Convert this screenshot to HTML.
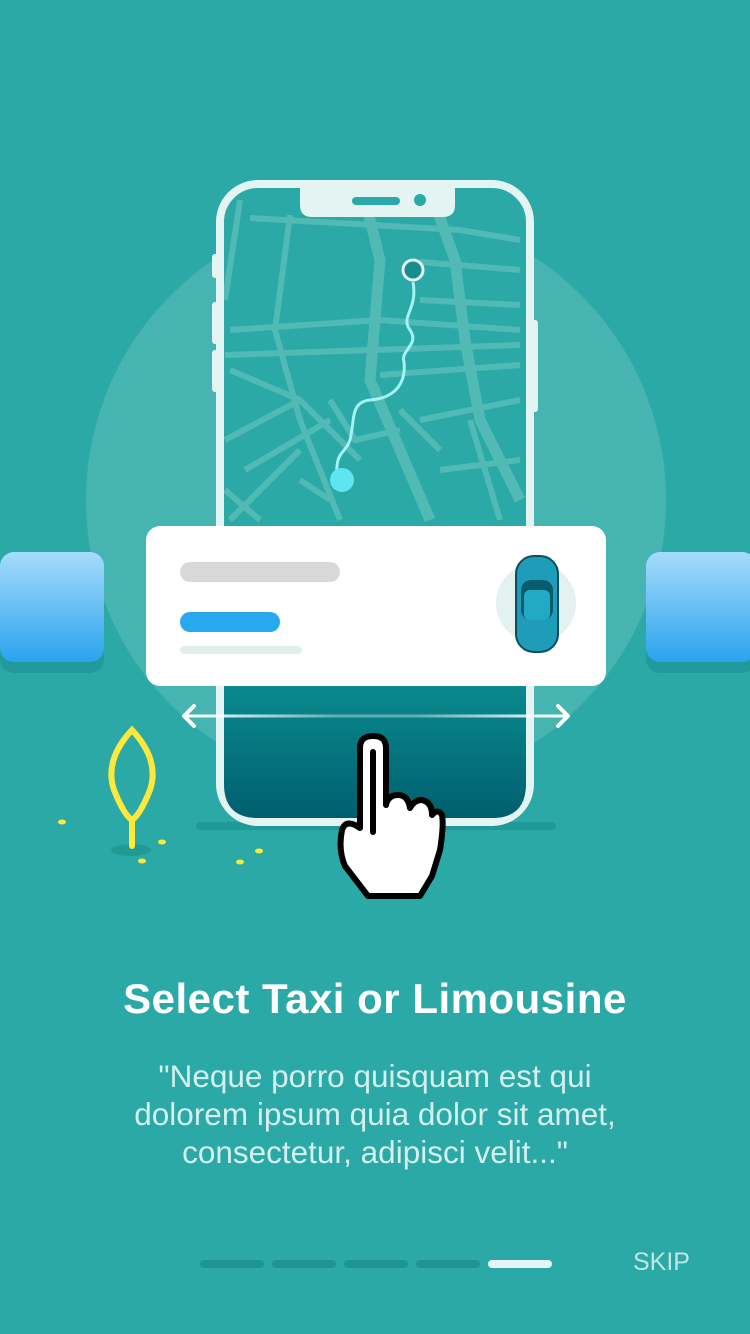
<!DOCTYPE html>
<html><head><meta charset="utf-8"><style>
html,body{margin:0;padding:0;}
body{width:750px;height:1334px;background:#2aa9a6;position:relative;overflow:hidden;font-family:"Liberation Sans",sans-serif;}
.t{position:absolute;left:0;width:750px;text-align:center;color:#fff;}
</style></head><body>
<svg width="750" height="1334" style="position:absolute;left:0;top:0">
<defs>
<linearGradient id="dk" x1="0" y1="0" x2="0" y2="1"><stop offset="0" stop-color="#0a8a8e"/><stop offset="1" stop-color="#005f6e"/></linearGradient>
<linearGradient id="bl" x1="0" y1="0" x2="0" y2="1"><stop offset="0" stop-color="#a6dcfa"/><stop offset="1" stop-color="#2aa3ee"/></linearGradient>
<linearGradient id="ar" gradientUnits="userSpaceOnUse" x1="186" y1="0" x2="566" y2="0"><stop offset="0" stop-color="#fff"/><stop offset=".4" stop-color="#fff" stop-opacity=".35"/><stop offset=".6" stop-color="#fff" stop-opacity=".35"/><stop offset="1" stop-color="#fff"/></linearGradient>
<clipPath id="sc"><rect x="224" y="188" width="302" height="630" rx="34"/></clipPath>
</defs>
<circle cx="376" cy="500" r="290" fill="#46b5b1"/>
<rect x="196" y="822" width="360" height="8" rx="4" fill="#1f9a96"/>
<rect x="0" y="563" width="104" height="110" rx="14" fill="#22999a"/>
<rect x="0" y="552" width="104" height="110" rx="14" fill="url(#bl)"/>
<rect x="646" y="563" width="110" height="110" rx="14" fill="#22999a"/>
<rect x="646" y="552" width="110" height="110" rx="14" fill="url(#bl)"/>
<rect x="212" y="254" width="8" height="24" rx="3" fill="#e4f4f2"/>
<rect x="212" y="302" width="8" height="42" rx="3" fill="#e4f4f2"/>
<rect x="212" y="350" width="8" height="42" rx="3" fill="#e4f4f2"/>
<rect x="530" y="320" width="8" height="92" rx="3" fill="#e4f4f2"/>
<rect x="220" y="184" width="310" height="638" rx="38" fill="#2aa9a6" stroke="#e4f4f2" stroke-width="8"/>
<g clip-path="url(#sc)" stroke="#52bab5" fill="none" stroke-width="6">
<path d="M230 330 L380 320 L520 330 M225 355 L520 345 M240 200 L225 300 M290 215 L275 330 L300 420 L340 520 M250 218 L460 230 L520 240 M420 262 L520 270 M420 300 L520 305 M380 375 L520 365 M420 420 L520 400 M230 370 L300 400 L360 460 M225 440 L300 400 M245 470 L330 420 M230 520 L300 450 M400 410 L440 450 M470 420 L500 520 M330 400 L355 440 L400 430 M225 490 L260 520 M440 470 L520 460 M300 480 L330 500"/>
<path d="M430 190 L455 260 L465 340 L480 420 L520 500" stroke-width="11"/>
<path d="M365 200 L380 260 L370 380 L430 520" stroke-width="11"/>
</g>
<path d="M300 188 H455 V205 Q455 217 443 217 H312 Q300 217 300 205 Z" fill="#e4f4f2"/>
<rect x="352" y="197" width="48" height="8" rx="4" fill="#2aa9a6"/>
<circle cx="420" cy="200" r="6" fill="#2aa9a6"/>
<path d="M413 282 C418 310 400 316 410 330 C420 345 400 350 404 362 C406 380 398 398 370 400 C350 402 355 420 350 440 C345 455 335 450 337 478" fill="none" stroke="#a5f1f3" stroke-width="3"/>
<circle cx="413" cy="270" r="10" fill="#168e8c" stroke="#e4f4f2" stroke-width="3"/>
<circle cx="342" cy="480" r="12" fill="#5fe4f2"/>
<path d="M224 686 H526 V784 Q526 818 492 818 H258 Q224 818 224 784 Z" fill="url(#dk)"/>
<rect x="146" y="526" width="460" height="160" rx="14" fill="#fff"/>
<rect x="180" y="562" width="160" height="20" rx="10" fill="#d8d8d8"/>
<rect x="180" y="612" width="100" height="20" rx="10" fill="#27a8ef"/>
<rect x="180" y="646" width="122" height="8" rx="4" fill="#e0eeec"/>
<circle cx="536" cy="603" r="40" fill="#e3f2f1"/>
<rect x="516" y="556" width="42" height="96" rx="18" fill="#1e9cb8" stroke="#0d4e5e" stroke-width="2"/>
<rect x="521" y="580" width="32" height="40" rx="10" fill="#0b5b6e"/>
<rect x="524" y="590" width="26" height="30" rx="6" fill="#22aac4"/>
<rect x="186" y="714.5" width="380" height="3" fill="url(#ar)"/>
<path d="M194 706 L184 716 L194 726 M558 706 L568 716 L558 726" stroke="#fff" stroke-width="4" fill="none" stroke-linecap="round" stroke-linejoin="round"/>
<path d="M360 828 V748 Q360 736 373 736 Q386 736 386 748 V805 Q388 795 398 795 Q408 795 410 808 Q414 800 422 800 Q432 802 432 815 Q438 808 442 815 Q444 825 440 850 L432 876 L420 896 H368 L345 866 Q338 850 342 830 Q346 818 360 828 Z" fill="#fff" stroke="#000" stroke-width="6" stroke-linejoin="round"/>
<path d="M373 752 V832" stroke="#000" stroke-width="6" stroke-linecap="round"/>
<ellipse cx="131" cy="850" rx="20" ry="6" fill="#219a94"/>
<path d="M132 730 Q160 760 150 790 Q140 815 132 820 Q124 815 114 790 Q104 760 132 730 Z M132 820 V846" fill="none" stroke="#ffe83c" stroke-width="6" stroke-linecap="round"/>
<g fill="#ffe83c"><ellipse cx="62" cy="822" rx="4" ry="2.5"/><ellipse cx="162" cy="842" rx="4" ry="2.5"/><ellipse cx="142" cy="861" rx="4" ry="2.5"/><ellipse cx="240" cy="862" rx="4" ry="2.5"/><ellipse cx="259" cy="851" rx="4" ry="2.5"/></g>
<g fill="#1f9591"><rect x="200" y="1260" width="64" height="8" rx="4"/><rect x="272" y="1260" width="64" height="8" rx="4"/><rect x="344" y="1260" width="64" height="8" rx="4"/><rect x="416" y="1260" width="64" height="8" rx="4"/></g>
<rect x="488" y="1260" width="64" height="8" rx="4" fill="#e4f4f2"/>
</svg>
<div class="t" style="top:975px;font-size:42px;font-weight:bold;letter-spacing:0.5px;">Select Taxi or Limousine</div>
<div class="t" style="top:1057px;font-size:31.5px;line-height:38px;color:#d4efed;">"Neque porro quisquam est qui<br>dolorem ipsum quia dolor sit amet,<br>consectetur, adipisci velit..."</div>
<div style="position:absolute;left:633px;top:1248px;font-size:25px;color:#bfe6e3;">SKIP</div>
</body></html>
